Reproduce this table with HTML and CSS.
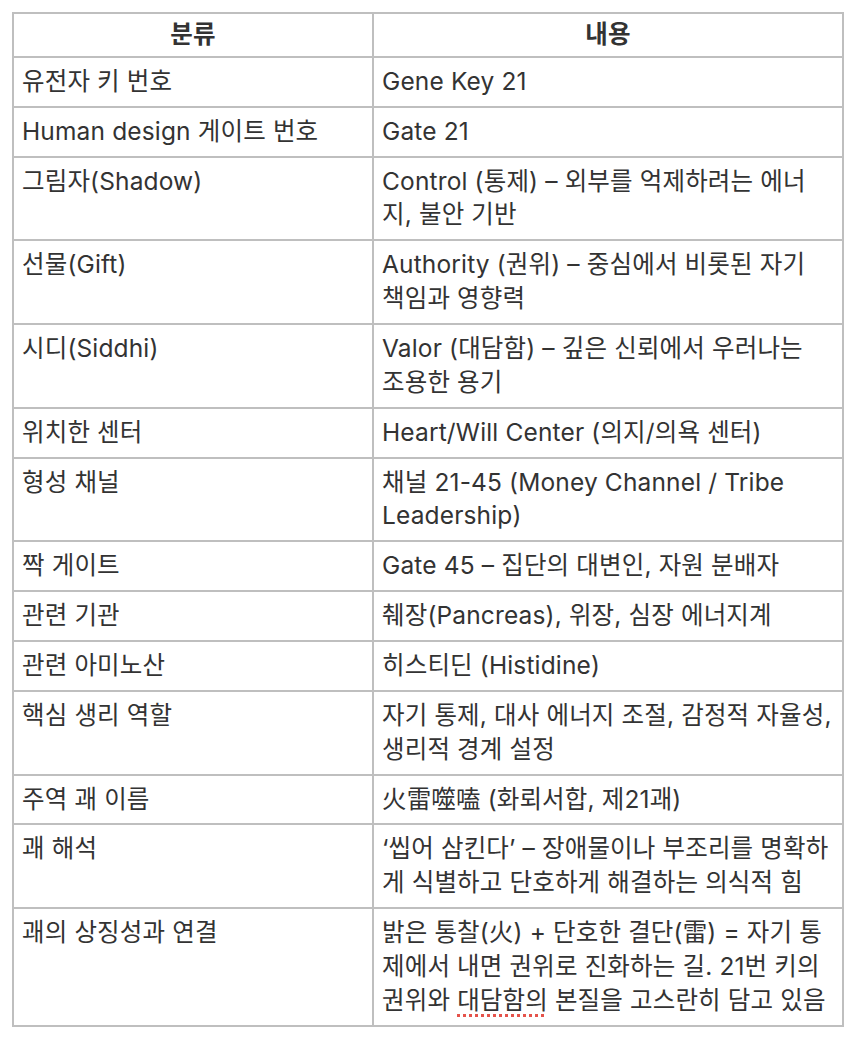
FILE: index.html
```html
<!DOCTYPE html>
<html lang="ko">
<head>
<meta charset="utf-8">
<title>Gene Key 21</title>
<link rel="stylesheet" href="styles.css">
</head>
<body>
<table class="info">
  <thead>
    <tr><th class="c1">분류</th><th class="c2">내용</th></tr>
  </thead>
  <tbody>
    <tr><td class="c1">유전자 키 번호</td><td class="c2">Gene Key 21</td></tr>
    <tr><td class="c1">Human design 게이트 번호</td><td class="c2">Gate 21</td></tr>
    <tr><td class="c1">그림자(Shadow)</td><td class="c2">Control (통제) – 외부를 억제하려는 에너<br>지, 불안 기반</td></tr>
    <tr><td class="c1">선물(Gift)</td><td class="c2">Authority (권위) – 중심에서 비롯된 자기<br>책임과 영향력</td></tr>
    <tr><td class="c1">시디(Siddhi)</td><td class="c2">Valor (대담함) – 깊은 신뢰에서 우러나는<br>조용한 용기</td></tr>
    <tr><td class="c1">위치한 센터</td><td class="c2">Heart/Will Center (의지/의욕 센터)</td></tr>
    <tr><td class="c1">형성 채널</td><td class="c2">채널 21-45 (Money Channel / Tribe<br>Leadership)</td></tr>
    <tr><td class="c1">짝 게이트</td><td class="c2">Gate 45 – 집단의 대변인, 자원 분배자</td></tr>
    <tr><td class="c1">관련 기관</td><td class="c2">췌장(Pancreas), 위장, 심장 에너지계</td></tr>
    <tr><td class="c1">관련 아미노산</td><td class="c2">히스티딘 (Histidine)</td></tr>
    <tr><td class="c1">핵심 생리 역할</td><td class="c2">자기 통제, 대사 에너지 조절, 감정적 자율성,<br>생리적 경계 설정</td></tr>
    <tr><td class="c1">주역 괘 이름</td><td class="c2">火雷噬嗑 (화뢰서합, 제21괘)</td></tr>
    <tr><td class="c1">괘 해석</td><td class="c2">‘씹어 삼킨다’ – 장애물이나 부조리를 명확하<br>게 식별하고 단호하게 해결하는 의식적 힘</td></tr>
    <tr><td class="c1">괘의 상징성과 연결</td><td class="c2">밝은 통찰(火) + 단호한 결단(雷) = 자기 통<br>제에서 내면 권위로 진화하는 길. 21번 키의<br>권위와 <span class="spell">대담함의</span> 본질을 고스란히 담고 있음</td></tr>
  </tbody>
</table>
</body>
</html>
```
FILE: styles.css
```css
html, body {
  margin: 0;
  padding: 0;
  background: #ffffff;
}
body {
  padding: 12px;
  font-family: Inter, "Noto Sans CJK KR", "Noto Sans", sans-serif;
  font-size: 24.5px;
  letter-spacing: 0.15px;
  color: #333333;
}
.info {
  border-collapse: separate;
  border-spacing: 0;
  table-layout: fixed;
  width: 832px;
  border-top: 2px solid #bfbfbf;
  border-left: 2px solid #bfbfbf;
}
.info th,
.info td {
  box-sizing: border-box;
  border-right: 2px solid #bfbfbf;
  border-bottom: 2px solid #bfbfbf;
  padding: 7px 8px;
  line-height: 33.86px;
  vertical-align: top;
  text-align: left;
  white-space: nowrap;
  overflow: hidden;
}
.info th {
  font-weight: 700;
  text-align: center;
  padding: 4px 8px;
}
.info .c1 { width: 360px; }
.info .c2 { width: 470px; }
.spell {
  text-decoration: underline dotted #e5534b;
  text-decoration-thickness: 3px;
  text-underline-offset: 5px;
}
```
